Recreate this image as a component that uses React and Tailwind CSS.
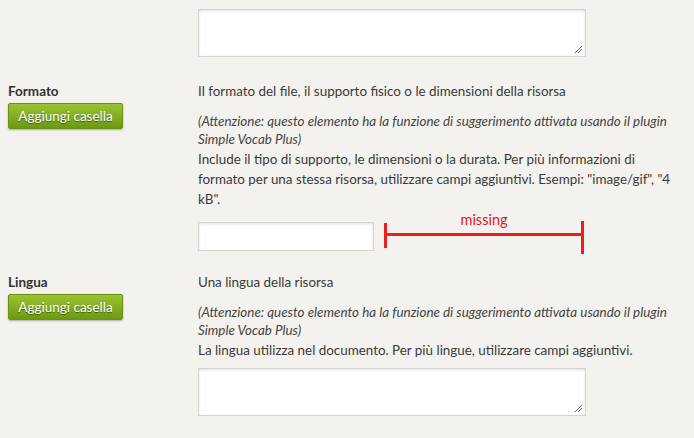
import React from "react";

const font = { fontFamily: "Lato, 'Open Sans', sans-serif" };

const AddButton = () => (
  <button
    type="button"
    className="mt-[2px] h-[26px] w-[115px] rounded-[2px] border border-[#6a9410] bg-gradient-to-b from-[#9cc231] to-[#6b9a12] text-[13.5px] leading-[24px] text-white shadow-[0_1px_2px_rgba(0,0,0,0.3)] [text-shadow:0_1px_1px_rgba(0,0,0,0.45)]"
  >
    Aggiungi casella
  </button>
);

const Hint = () => (
  <p className="mt-[11px] whitespace-nowrap text-[13.4px] italic leading-[18px] text-[#444]">
    (Attenzione: questo elemento ha la funzione di suggerimento attivata usando il plugin
    <br />
    Simple Vocab Plus)
  </p>
);

const Textarea = () => (
  <div className="relative h-[48px] w-[388px] border border-[#d4d4d2] bg-white shadow-[inset_0_1px_3px_rgba(0,0,0,0.12)]">
    <svg className="absolute bottom-[3px] right-[3px]" width="8" height="8" viewBox="0 0 8 8">
      <path d="M1 8 L8 1 M4 8 L8 4" stroke="#666" strokeWidth="1" />
    </svg>
  </div>
);

export default function App() {
  return (
    <div
      className="h-[438px] w-[694px] overflow-hidden bg-[#f3f2ee] text-[13.4px] text-[#3a3a3a]"
      style={font}
    >
      <div className="pl-[198px] pt-[9px]">
        <Textarea />
      </div>

      <div className="mt-[24px] flex">
        <div className="w-[198px] pl-[8px]">
          <div className="text-[13.5px] font-bold leading-[20px] text-[#333]">Formato</div>
          <AddButton />
        </div>
        <div className="w-[460px]">
          <p className="leading-[20px]">
            Il formato del file, il supporto fisico o le dimensioni della risorsa
          </p>
          <Hint />
          <p className="mt-[1px] whitespace-nowrap leading-[20px]">
            Include il tipo di supporto, le dimensioni o la durata. Per più informazioni di
            <br />
            formato per una stessa risorsa, utilizzare campi aggiuntivi. Esempi: "image/gif", "4
            <br />
            kB".
          </p>
          <div className="mt-[13px] flex items-start">
            <div className="h-[29px] w-[176px] border border-[#d4d4d2] bg-white shadow-[inset_0_1px_3px_rgba(0,0,0,0.12)]" />
            <div className="relative ml-[10px] mt-[-1px] h-[33px] w-[200px]">
              <div className="absolute left-0 top-[2px] h-[25px] w-[3px] bg-[#ee1c1c]" />
              <div className="absolute left-0 top-[12px] h-[3px] w-[197px] bg-[#ee1c1c]" />
              <div className="absolute right-0 top-0 h-[33px] w-[3px] bg-[#ee1c1c]" />
              <div className="absolute left-0 right-0 top-[-9px] text-center text-[14.5px] leading-[16px] text-[#e0161c]">
                missing
              </div>
            </div>
          </div>
        </div>
      </div>

      <div className="mt-[18px] flex">
        <div className="w-[198px] pl-[8px]">
          <div className="text-[13.5px] font-bold leading-[20px] text-[#333]">Lingua</div>
          <AddButton />
        </div>
        <div className="w-[460px]">
          <p className="leading-[20px]">Una lingua della risorsa</p>
          <Hint />
          <p className="mt-[1px] whitespace-nowrap leading-[20px]">
            La lingua utilizza nel documento. Per più lingue, utilizzare campi aggiuntivi.
          </p>
          <div className="mt-[8px]">
            <Textarea />
          </div>
        </div>
      </div>
    </div>
  );
}
